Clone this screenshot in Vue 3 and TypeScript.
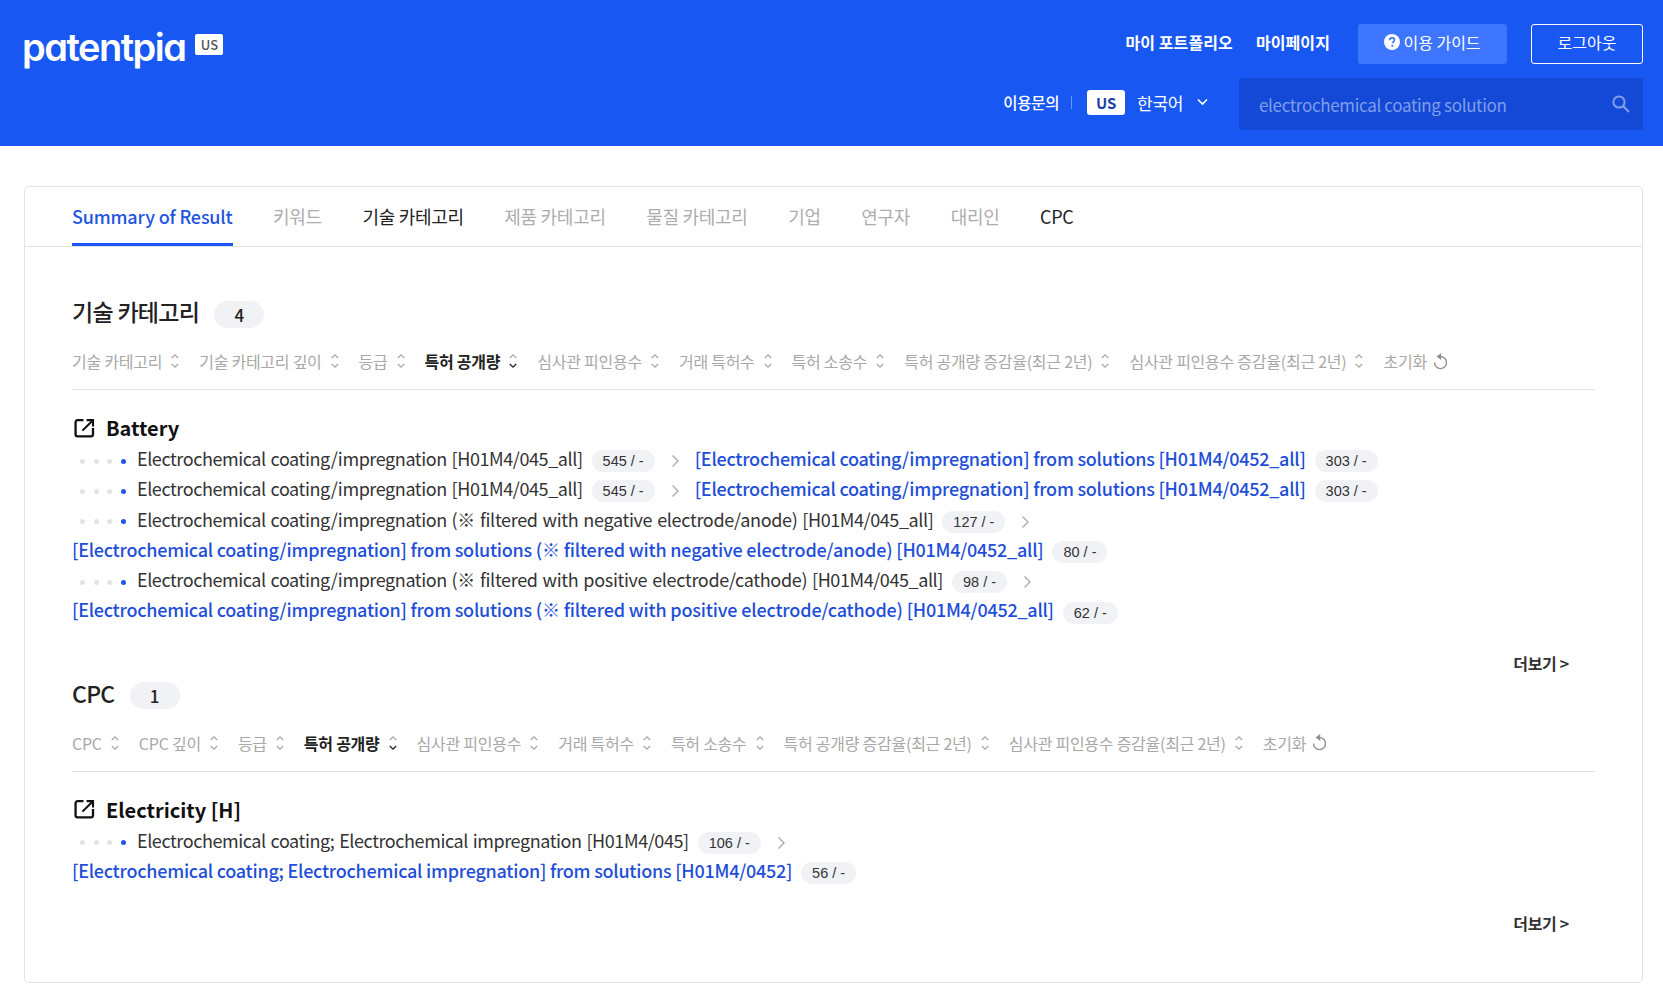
<script setup lang="ts">
interface SortItem { label: string; active?: boolean }
interface Row { text: string; count: string; link?: string; linkCount?: string; wrap?: boolean }
interface Section { title: string; count: number; sorts: SortItem[]; category: string; rows: Row[] }

const tabs = [
  { label: 'Summary of Result', state: 'on' },
  { label: '키워드', state: 'off' },
  { label: '기술 카테고리', state: 'dark' },
  { label: '제품 카테고리', state: 'off' },
  { label: '물질 카테고리', state: 'off' },
  { label: '기업', state: 'off' },
  { label: '연구자', state: 'off' },
  { label: '대리인', state: 'off' },
  { label: 'CPC', state: 'dark' },
]

const commonSorts: SortItem[] = [
  { label: '등급' },
  { label: '특허 공개량', active: true },
  { label: '심사관 피인용수' },
  { label: '거래 특허수' },
  { label: '특허 소송수' },
  { label: '특허 공개량 증감율(최근 2년)' },
  { label: '심사관 피인용수 증감율(최근 2년)' },
]

const sections: Section[] = [
  {
    title: '기술 카테고리',
    count: 4,
    sorts: [{ label: '기술 카테고리' }, { label: '기술 카테고리 깊이' }, ...commonSorts],
    category: 'Battery',
    rows: [
      { text: 'Electrochemical coating/impregnation [H01M4/045_all]', count: '545 / -', link: '[Electrochemical coating/impregnation] from solutions [H01M4/0452_all]', linkCount: '303 / -' },
      { text: 'Electrochemical coating/impregnation [H01M4/045_all]', count: '545 / -', link: '[Electrochemical coating/impregnation] from solutions [H01M4/0452_all]', linkCount: '303 / -' },
      { text: 'Electrochemical coating/impregnation (※ filtered with negative electrode/anode) [H01M4/045_all]', count: '127 / -', link: '[Electrochemical coating/impregnation] from solutions (※ filtered with negative electrode/anode) [H01M4/0452_all]', linkCount: '80 / -', wrap: true },
      { text: 'Electrochemical coating/impregnation (※ filtered with positive electrode/cathode) [H01M4/045_all]', count: '98 / -', link: '[Electrochemical coating/impregnation] from solutions (※ filtered with positive electrode/cathode) [H01M4/0452_all]', linkCount: '62 / -', wrap: true },
    ],
  },
  {
    title: 'CPC',
    count: 1,
    sorts: [{ label: 'CPC' }, { label: 'CPC 깊이' }, ...commonSorts],
    category: 'Electricity [H]',
    rows: [
      { text: 'Electrochemical coating; Electrochemical impregnation [H01M4/045]', count: '106 / -', link: '[Electrochemical coating; Electrochemical impregnation] from solutions [H01M4/0452]', linkCount: '56 / -', wrap: true },
    ],
  },
]

// the "(※ filtered ...)" part runs a little wider than the rest of the line
const splitNote = (text = '') => text.split(/(\(※.*?\))/)
</script>

<template>
  <div class="page">
    <header class="top">
      <div class="logo">
        <span class="logo-word">patentpia</span>
        <span class="logo-tag">US</span>
      </div>
      <div class="top-right">
        <div class="top-line">
          <a class="top-link">마이 포트폴리오</a>
          <a class="top-link">마이페이지</a>
          <button class="guide">
            <svg width="16" height="16" viewBox="0 0 16 16">
              <circle cx="8" cy="8" r="8" fill="#fff" />
              <path d="M5.6 6.2c0-1.4 1-2.3 2.5-2.3s2.4.9 2.4 2.1c0 1-.6 1.5-1.3 2-.6.4-.8.7-.8 1.3" fill="none" stroke="#3d75ff" stroke-width="1.7" />
              <circle cx="8.3" cy="11.8" r="1.1" fill="#3d75ff" />
            </svg>
            <span>이용 가이드</span>
          </button>
          <button class="logout"><span>로그아웃</span></button>
        </div>
        <div class="top-line second">
          <a class="inquiry">이용문의</a>
          <span class="bar"></span>
          <span class="country">US</span>
          <span class="lang">한국어</span>
          <svg class="lang-arrow" width="11" height="8" viewBox="0 0 11 8">
            <path d="M1 1.5 5.5 6 10 1.5" fill="none" stroke="#fff" stroke-width="1.6" />
          </svg>
          <div class="search">
            <span class="search-text">electrochemical coating solution</span>
            <svg width="20" height="20" viewBox="0 0 20 20">
              <circle cx="8" cy="8" r="5.6" fill="none" stroke="#7f9fea" stroke-width="2" />
              <path d="m12.2 12.2 5.8 5.8" stroke="#7f9fea" stroke-width="2.2" />
            </svg>
          </div>
        </div>
      </div>
    </header>

    <main class="card">
      <nav class="tabs">
        <a v-for="tab in tabs" :key="tab.label" class="tab" :class="tab.state">{{ tab.label }}</a>
      </nav>

      <section v-for="sec in sections" :key="sec.title" class="section">
        <div class="sec-head">
          <h2>{{ sec.title }}</h2>
          <span class="sec-count">{{ sec.count }}</span>
        </div>

        <div class="sorts">
          <span v-for="s in sec.sorts" :key="s.label" class="sort" :class="{ active: s.active }">
            {{ s.label }}
            <svg width="10" height="16" viewBox="0 0 10 16" fill="none">
              <path d="M1.8 5 5 1.8 8.2 5" stroke="#a8a8a8" stroke-width="1.3" />
              <path d="M1.8 11 5 14.2 8.2 11" :stroke="s.active ? '#222' : '#a8a8a8'" stroke-width="1.3" />
            </svg>
          </span>
          <span class="sort reset">
            초기화
            <svg width="14" height="17" viewBox="0 0 14 17" fill="none">
              <path d="M7.5 3.6a6 6 0 1 1-6 6" stroke="#8e8e8e" stroke-width="1.4" />
              <path d="M8.2 0 3.6 3.6l4.6 3.4z" fill="#8e8e8e" />
            </svg>
          </span>
        </div>

        <div class="result">
          <h3 class="cat">
            <svg width="21" height="20" viewBox="0 0 20 19" fill="none">
              <path d="M9 2H3.5a2 2 0 0 0-2 2v11.5a2 2 0 0 0 2 2h12.6a2 2 0 0 0 2-2V9.5" stroke="#111" stroke-width="2.2" />
              <path d="M12 2h6.1v6.1M17.8 2.3 8 12" stroke="#111" stroke-width="2" />
            </svg>
            {{ sec.category }}
          </h3>

          <div v-for="(row, i) in sec.rows" :key="i" class="row">
            <span class="dots"><i></i><i></i><i></i><b></b></span>
            <span class="label">
              <span v-for="(part, p) in splitNote(row.text)" :key="p" :class="{ note: p === 1 }">{{ part }}</span>
            </span>
            <span class="pill">{{ row.count }}</span>
            <svg class="next" width="9" height="14" viewBox="0 0 9 14" fill="none">
              <path d="m1.5 1.5 5.5 5.5-5.5 5.5" stroke="#aaa" stroke-width="1.4" />
            </svg>
            <br v-if="row.wrap" class="break" />
            <span class="label link">
              <span v-for="(part, p) in splitNote(row.link)" :key="p" :class="{ note: p === 1 }">{{ part }}</span>
            </span>
            <span class="pill">{{ row.linkCount }}</span>
          </div>
        </div>

        <div class="more"><a>더보기 &gt;</a></div>
      </section>
    </main>
  </div>
</template>

<style>
html, body { margin: 0; background: #fff; }
</style>

<style scoped>
.page {
  font-family: "Noto Sans CJK KR", "Noto Sans", sans-serif;
  color: #222;
  height: 1007px;
  overflow: hidden;
}

.top {
  height: 146px;
  background: #1857f2;
  box-sizing: border-box;
  padding: 24px 20px 0 22px;
  display: flex;
  justify-content: space-between;
}

.logo { display: flex; align-items: flex-start; gap: 10px; }
.logo-word {
  font-family: Inter, Lato, sans-serif;
  font-feature-settings: "cv11" 1;
  font-weight: 600;
  font-size: 38px;
  line-height: 46px;
  color: #fff;
  letter-spacing: -1.5px;
}
.logo-tag {
  margin-top: 10px;
  width: 28px;
  height: 21px;
  background: #fff;
  border-radius: 2px;
  color: #555;
  font-size: 13px;
  font-weight: 500;
  line-height: 21px;
  text-align: center;
}

.top-right { display: flex; flex-direction: column; gap: 14px; align-items: flex-end; }
.top-line { display: flex; align-items: center; }
.top-link {
  color: #fff;
  font-size: 16px;
  font-weight: 700;
  margin: 0 23px 4px 0;
  letter-spacing: 0.1px;
}
.top-link + .top-link { margin-right: 28px; }

.guide {
  width: 149px;
  height: 40px;
  background: #3d75ff;
  border: none;
  border-radius: 3px;
  color: #fff;
  font: inherit;
  font-size: 16px;
  display: flex;
  align-items: center;
  justify-content: center;
  gap: 3px;
  margin-right: 24px;
  padding: 0 0 4px;
}
.logout {
  width: 112px;
  height: 40px;
  background: transparent;
  border: 1px solid #fff;
  border-radius: 3px;
  color: #fff;
  font: inherit;
  font-size: 16px;
  padding: 0 0 4px;
}

.second { height: 52px; }
.inquiry {
  color: #fff;
  font-size: 15.5px;
  font-weight: 500;
  letter-spacing: -0.3px;
  margin-bottom: 4px;
}
.bar { width: 1px; height: 13px; background: #6f95f8; margin: 0 15px 4px 12px; }
.country {
  width: 38px;
  height: 25px;
  background: #fff;
  border-radius: 3px;
  color: #1a3fa8;
  font-size: 15px;
  font-weight: 700;
  line-height: 25px;
  text-align: center;
  margin: 0 12px 4px 0;
}
.lang { color: #fff; font-size: 17px; letter-spacing: -0.34px; margin: 0 14px 4px 0; }
.lang-arrow { margin: 0 31px 4px 0; }
.search {
  width: 404px;
  height: 52px;
  box-sizing: border-box;
  padding: 0 12px 0 20px;
  background: #1448d6;
  border-radius: 4px;
  display: flex;
  align-items: center;
  justify-content: space-between;
}
.search-text { color: #7f9fea; font-size: 17px; letter-spacing: -0.34px; }

.card {
  margin: 40px 20px 0 24px;
  height: 797px;
  box-sizing: border-box;
  border: 1px solid #e2e2e2;
  border-radius: 5px;
  padding: 0 47px;
}

.tabs {
  margin: 0 -47px;
  padding: 0 47px;
  height: 59px;
  border-bottom: 1px solid #e2e2e2;
  display: flex;
  gap: 40.6px;
}
.tab {
  font-size: 18px;
  line-height: 59px;
  height: 59px;
  box-sizing: border-box;
  letter-spacing: -0.3px;
}
.tab.on { color: #1f55e0; border-bottom: 3px solid #1956f5; font-weight: 500; letter-spacing: -0.17px; }
.tab.off { color: #adadad; }
.tab.dark { color: #222; }

.sec-head {
  display: flex;
  align-items: center;
  gap: 15px;
  margin-top: 44px;
  height: 40px;
}
.section + .section .sec-head { margin-top: 0; }
.sec-head h2 { margin: 0; font-size: 23px; font-weight: 500; color: #222; letter-spacing: -0.7px; }
.sec-count {
  width: 50px;
  height: 27px;
  margin-top: 6px;
  border-radius: 14px;
  background: #f1f2f6;
  font-size: 17px;
  font-weight: 500;
  line-height: 27px;
  text-align: center;
}

.sorts {
  display: flex;
  align-items: center;
  gap: 19px;
  height: 59px;
  padding-top: 2px;
  box-sizing: border-box;
  border-bottom: 1px solid #e2e2e2;
}
.sort {
  display: flex;
  align-items: center;
  gap: 8px;
  font-size: 16px;
  color: #a8a8a8;
  letter-spacing: -0.25px;
}
.sort.active { color: #222; font-weight: 700; }
.sort.reset { gap: 6px; }

.result { padding-top: 22px; }
.cat {
  margin: 0;
  display: flex;
  align-items: center;
  gap: 11px;
  font-size: 20px;
  font-weight: 700;
  color: #111;
  height: 31px;
  padding-left: 2px;
}

.row {
  font-size: 18px;
  line-height: 30.3px;
  color: #333;
  letter-spacing: -0.42px;
  word-spacing: 1.2px;
}
.dots {
  display: inline-flex;
  align-items: center;
  gap: 8.5px;
  width: 65px;
  padding-left: 8px;
  box-sizing: border-box;
  vertical-align: middle;
}
.dots i, .dots b { width: 5px; height: 5px; border-radius: 50%; background: #e3e3e3; }
.dots b { background: #1f55e0; }
.label { margin-right: 9px; }
.note { letter-spacing: -0.32px; }
.link { color: #1f4fd8; font-weight: 500; letter-spacing: -0.25px; word-spacing: 0; }
.link .note { letter-spacing: -0.17px; }
.pill {
  display: inline-block;
  font-family: "Liberation Sans", sans-serif;
  font-size: 14.5px;
  letter-spacing: 0;
  word-spacing: 0;
  line-height: 22px;
  padding: 0 11px;
  background: #f1f2f6;
  border-radius: 11px;
  vertical-align: middle;
  color: #333;
}
.next { margin: 0 15px 0 16px; vertical-align: middle; }

.more {
  text-align: right;
  padding-right: 26px;
  margin-top: 28px;
  height: 20px;
  line-height: 21px;
  font-size: 16px;
  font-weight: 700;
  color: #333;
  letter-spacing: -0.3px;
}
</style>
